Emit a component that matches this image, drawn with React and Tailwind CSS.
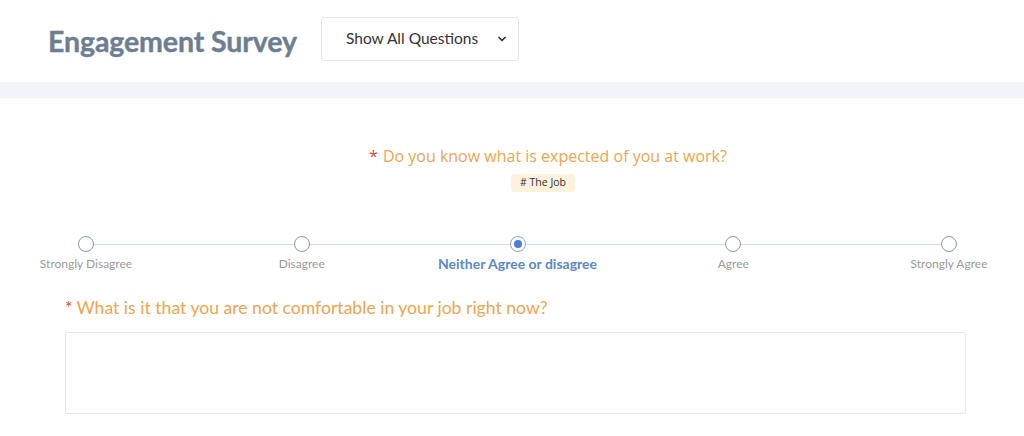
import React, { useState } from "react";

const options = [
  "Strongly Disagree",
  "Disagree",
  "Neither Agree or disagree",
  "Agree",
  "Strongly Agree",
];

function App() {
  const [answer, setAnswer] = useState(2);
  const [comment, setComment] = useState("");

  return (
    <div className="min-h-screen bg-white font-['Lato',sans-serif]">
      <header className="flex h-[82px] items-center pl-12">
        <h1 className="text-[28.5px] font-bold tracking-[-0.1px] text-[#6e7e91] [-webkit-text-stroke:0.4px_#6e7e91]">
          Engagement Survey
        </h1>
        <div className="ml-[24px] mt-[-4px] flex h-[44px] w-[198px] items-center justify-between rounded-[3px] border border-[#e4e6e9] pl-6 pr-[10px] text-[15.5px] text-[#333]">
          <span>Show All Questions</span>
          <svg width="12" height="12" viewBox="0 0 24 24" fill="none" stroke="#333" strokeWidth="3.5" strokeLinecap="round" strokeLinejoin="round">
            <path d="M6 9l6 6 6-6" />
          </svg>
        </div>
      </header>

      <div className="h-4 bg-[#f1f5f9]" />

      <main className="pt-[46px]">
        <div className="flex flex-col items-center">
          <p className="ml-[72px] font-['Open_Sans',sans-serif] text-[16px] text-[#eea550]">
            <span className="mr-[5px] text-[#e2453c]">*</span>
            Do you know what is expected of you at work?
          </p>
          <span className="ml-[62px] mt-[6px] flex h-[18px] items-center rounded-sm bg-[#fdf2dc] px-[9px] font-['Open_Sans',sans-serif] text-[10.5px] text-[#333]">
            # The Job
          </span>
        </div>

        <div className="relative ml-[26px] mt-[44px] flex w-[983px] justify-between">
          <div className="absolute left-[60px] right-[60px] top-[8px] h-px bg-[#cddcec]" />
          {options.map((label, i) => {
            const selected = answer === i;
            return (
              <button
                key={label}
                type="button"
                onClick={() => setAnswer(i)}
                className="relative flex w-[120px] flex-col items-center"
              >
                <span
                  className={`flex h-[16px] w-[16px] items-center justify-center rounded-full border-[1.5px] bg-white ${
                    selected ? "border-[#8aa6d0]" : "border-[#8697ad]"
                  }`}
                >
                  {selected ? <span className="h-[8px] w-[8px] rounded-full bg-[#4a80d6]" /> : null}
                </span>
                <span
                  className={`whitespace-nowrap ${
                    selected
                      ? "mt-[1px] text-[14px] font-bold text-[#5b88c7]"
                      : "mt-[3px] text-[12px] text-[#9a9a9a]"
                  }`}
                >
                  {label}
                </span>
              </button>
            );
          })}
        </div>

        <div className="ml-[65px] mt-[21px] w-[901px]">
          <p className="text-[17.6px] text-[#eea550]">
            <span className="mr-1 text-[#e2453c]">*</span>
            What is it that you are not comfortable in your job right now?
          </p>
          <textarea
            value={comment}
            onChange={(e) => setComment(e.target.value)}
            className="mt-[11px] block h-[82px] w-full resize-none rounded-[2px] border border-[#e6e7e9] outline-none"
          />
        </div>
      </main>
    </div>
  );
}

export default App;
